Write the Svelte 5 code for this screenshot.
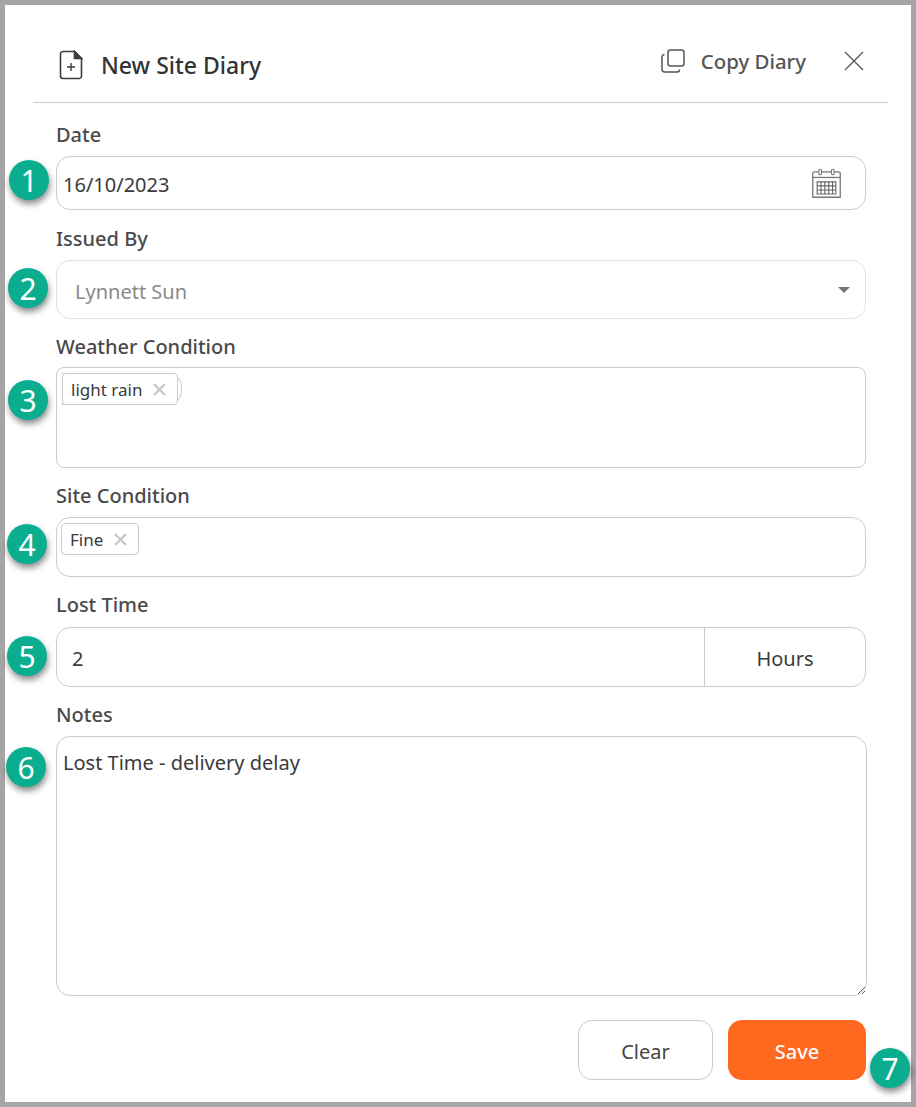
<script lang="ts">
	let date = $state('16/10/2023');
	let lostTime = $state('2');
	let notes = $state('Lost Time - delivery delay');
	let weather = $state(['light rain']);
	let site = $state(['Fine']);

	const badges = [
		{ n: 1, x: 9, y: 160 },
		{ n: 2, x: 8, y: 268 },
		{ n: 3, x: 8, y: 380 },
		{ n: 4, x: 7, y: 524 },
		{ n: 5, x: 7, y: 636 },
		{ n: 6, x: 6, y: 747 },
		{ n: 7, x: 870, y: 1048 }
	];
</script>

<div class="frame">
	<header class="head">
		<div class="title">
			<svg width="26" height="32" viewBox="0 0 26 32" fill="none" stroke="#3c3c3c" stroke-width="1.6">
				<path d="M5 2.5h11.5l7 7V27a2.5 2.5 0 0 1-2.5 2.5H5A2.5 2.5 0 0 1 2.5 27V5A2.5 2.5 0 0 1 5 2.5z" />
				<path d="M16.5 2.5v7h7z" fill="#3c3c3c" />
				<path d="M9 18h8M13 14v8" stroke-width="1.4" />
			</svg>
			<h1>New Site Diary</h1>
		</div>
		<div class="tools">
			<button class="copy" type="button">
				<svg width="24" height="24" viewBox="0 0 24 24" fill="none" stroke="#555" stroke-width="1.5">
					<rect x="7" y="1" width="16" height="16" rx="2.5" />
					<path d="M3.5 5.5A2.5 2.5 0 0 0 1 8v12.5A2.5 2.5 0 0 0 3.5 23H16a2.5 2.5 0 0 0 2.5-2.5" />
				</svg>
				Copy Diary
			</button>
			<button class="close" type="button" aria-label="Close">
				<svg width="20" height="20" viewBox="0 0 20 20" stroke="#555" stroke-width="1.3">
					<path d="M1 1l18 18M19 1L1 19" />
				</svg>
			</button>
		</div>
	</header>

	<form class="form">
		<div class="field">
			<label for="date">Date</label>
			<div class="control date">
				<input id="date" bind:value={date} />
				<svg width="33" height="33" viewBox="0 0 30 30" fill="none" stroke="#777" stroke-width="1">
					<path d="M4 4.5h22a1.5 1.5 0 0 1 1.5 1.5v21.5h-25V6A1.5 1.5 0 0 1 4 4.5z" stroke-width="1.2" />
					<path d="M2.5 9.5h25" stroke-width="1.2" />
					<rect x="8" y="2" width="2.5" height="5" rx="1.2" fill="#fff" />
					<rect x="19.5" y="2" width="2.5" height="5" rx="1.2" fill="#fff" />
					<path d="M6.5 13.5h17v11h-17zM6.5 17.2h17M6.5 20.9h17M10 13.5v11M13.5 13.5v11M17 13.5v11M20.5 13.5v11" stroke="#666" />
				</svg>
			</div>
		</div>

		<div class="field issued-field">
			<label for="issued">Issued By</label>
			<div class="control issued" id="issued">
				<span>Lynnett Sun</span>
				<i class="caret"></i>
			</div>
		</div>

		<div class="field">
			<span class="label weather-label">Weather Condition</span>
			<div class="control tags weather">
				{#each weather as t}
					<span class="tag-wrap">
						<span class="tag">{t}
							<svg width="13" height="13" viewBox="0 0 13 13" stroke="#c8c8c8" stroke-width="2.4"><path d="M1 1l11 11M12 1L1 12" /></svg>
						</span>
					</span>
				{/each}
			</div>
		</div>

		<div class="field">
			<span class="label">Site Condition</span>
			<div class="control tags site">
				{#each site as t}
					<span class="tag">{t}
						<svg width="13" height="13" viewBox="0 0 13 13" stroke="#c8c8c8" stroke-width="2.4"><path d="M1 1l11 11M12 1L1 12" /></svg>
					</span>
				{/each}
			</div>
		</div>

		<div class="field">
			<label for="lost" class="lost-label">Lost Time</label>
			<div class="control lost">
				<input id="lost" bind:value={lostTime} />
				<span class="unit">Hours</span>
			</div>
		</div>

		<div class="field">
			<label for="notes">Notes</label>
			<textarea id="notes" class="control notes" bind:value={notes}></textarea>
		</div>

		<div class="actions">
			<button class="btn clear" type="button">Clear</button>
			<button class="btn save" type="button">Save</button>
		</div>
	</form>

	{#each badges as b}
		<span class="badge" style="left: {b.x}px; top: {b.y}px">{b.n}</span>
	{/each}
</div>

<style>
	:global(body) {
		margin: 0;
		background: #fff;
	}
	.frame {
		position: relative;
		box-sizing: border-box;
		width: 916px;
		height: 1107px;
		border: 5px solid #a5a5a5;
		background: #fff;
		font-family: 'Noto Sans', 'Open Sans', sans-serif;
		color: #3b3b3b;
	}
	.badge {
		position: absolute;
		margin: -5px;
		width: 40px;
		height: 40px;
		border-radius: 50%;
		background: #0aae8f;
		color: #fff;
		font-size: 30px;
		line-height: 41px;
		text-align: center;
		box-shadow: 1px 4px 6px rgba(0, 0, 0, 0.45);
	}
	.head {
		display: flex;
		align-items: center;
		justify-content: space-between;
		height: 98px;
		box-sizing: border-box;
		margin: 0 23px 0 28px;
		padding: 22px 24px 0 25px;
		border-bottom: 1px solid #ccc;
	}
	.title {
		display: flex;
		align-items: center;
		gap: 17px;
	}
	h1 {
		margin: 0;
		font-size: 23px;
		font-weight: 500;
		color: #333;
	}
	.tools {
		display: flex;
		align-items: center;
		gap: 38px;
		margin-top: -7px;
	}
	.copy {
		display: flex;
		align-items: center;
		gap: 16px;
		padding: 0;
		border: none;
		background: none;
		font: inherit;
		font-size: 20.4px;
		font-weight: 500;
		color: #555;
	}
	.close {
		display: flex;
		padding: 0;
		border: none;
		background: none;
	}
	.form {
		display: flex;
		flex-direction: column;
		gap: 18px;
		padding: 22px 40px 0 51px;
	}
	label, .label {
		display: block;
		height: 20px;
		margin-bottom: 11px;
		font-size: 20px;
		font-weight: 500;
		line-height: 20px;
		color: #4a4a4a;
	}
	.issued-field { margin-top: 1px; }
	.weather-label { margin-bottom: 10px; }
	.lost-label { margin-bottom: 12px; }
	.field { display: block; }
	.control {
		box-sizing: border-box;
		width: 810px;
		border: 1px solid #ccc;
		border-radius: 14px;
		background: #fff;
		font-family: inherit;
		font-size: 20px;
		color: #3b3b3b;
	}
	.date {
		display: flex;
		align-items: center;
		height: 54px;
		padding: 0 22px 0 6px;
	}
	input {
		flex: 1;
		min-width: 0;
		border: none;
		outline: none;
		padding: 2px 0 0;
		background: none;
		font: inherit;
		color: inherit;
	}
	.issued {
		display: flex;
		align-items: center;
		justify-content: space-between;
		height: 59px;
		padding: 4px 15px 0 18px;
		border-color: #e2e2e2;
		color: #8a8a8a;
	}
	.caret {
		margin-top: -4px;
		border-left: 6px solid transparent;
		border-right: 6px solid transparent;
		border-top: 6px solid #777;
	}
	.tags {
		display: flex;
		align-items: flex-start;
		padding: 5px 4px;
		border-radius: 8px;
		font-size: 17px;
	}
	.weather { height: 101px; }
	.site {
		height: 60px;
		border-radius: 14px;
	}
	.tag-wrap {
		display: flex;
		width: 121px;
		box-sizing: border-box;
		border: 1px solid #ccc;
		border-left-color: transparent;
		border-radius: 0 14px 14px 0;
	}
	.tag {
		display: flex;
		align-items: center;
		gap: 11px;
		box-sizing: border-box;
		height: 32px;
		padding: 0 11px 0 8px;
		border: 1px solid #ccc;
		border-radius: 4px;
		background: #fff;
		line-height: 1;
	}
	.tag-wrap .tag { margin: -1px 0; }
	.lost {
		display: flex;
		align-items: center;
		height: 60px;
	}
	.lost input {
		padding-left: 15px;
	}
	.unit {
		box-sizing: border-box;
		width: 161px;
		height: 100%;
		border-left: 1px solid #ccc;
		line-height: 62px;
		text-align: center;
	}
	.notes {
		display: block;
		width: 811px;
		height: 260px;
		padding: 12px 6px;
		outline: none;
	}
	.actions {
		display: flex;
		justify-content: flex-end;
		gap: 15px;
		width: 810px;
		margin-top: 6px;
	}
	.btn {
		height: 60px;
		padding: 2px 0 0;
		border-radius: 14px;
		font: inherit;
		font-size: 20px;
	}
	.clear {
		width: 135px;
		border: 1px solid #ccc;
		background: #fff;
		color: #444;
	}
	.save {
		width: 138px;
		border: none;
		background: #ff681f;
		color: #fff;
		font-weight: 500;
	}
</style>
